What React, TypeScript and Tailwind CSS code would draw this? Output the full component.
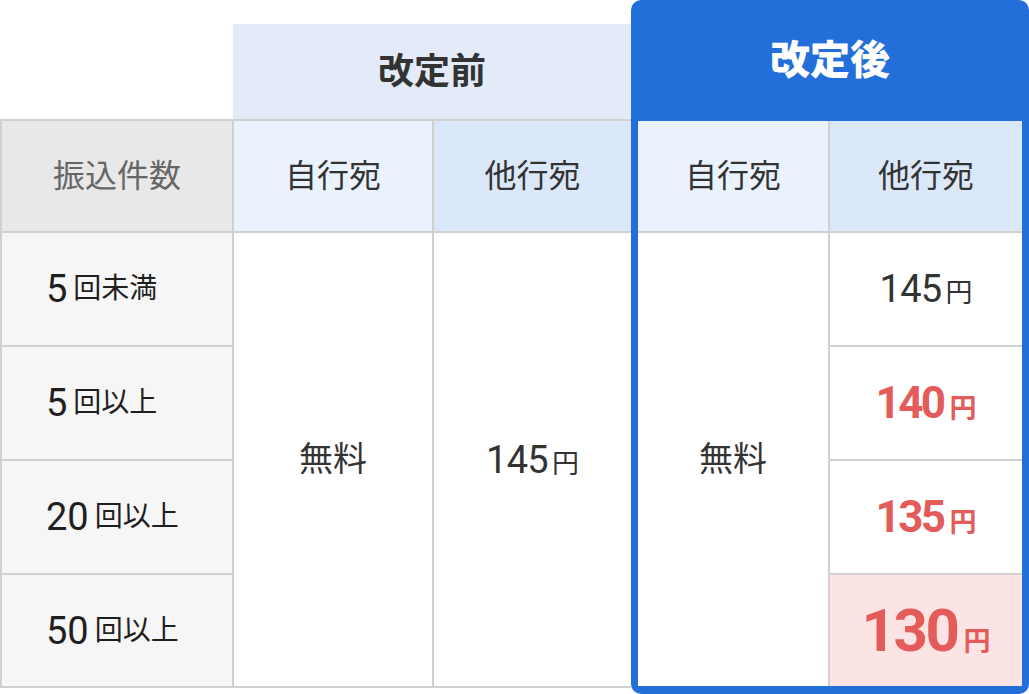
import React from 'react';

const border = 'bg-[#d0d0d0]';

const Count: React.FC<{ n: string; label: string }> = ({ n, label }) => (
  <div className="flex items-center bg-[#f6f6f6] pl-[44px] text-[#1f1f1f]">
    <span className="text-[38px] leading-none">{n}</span>
    <span className="ml-[6px] text-[28px] leading-none">{label}</span>
  </div>
);

const Price: React.FC<{ value: string; hot?: boolean; big?: boolean; bg?: string }> = ({ value, hot, big, bg = 'bg-white' }) => (
  <div className={`flex items-center justify-center ${bg}`}>
    <div className={`flex items-baseline ${hot ? 'font-bold text-[#e35c5a]' : 'text-[#333]'}`}>
      <span className={`leading-none ${big ? 'text-[60px] tracking-[-0.04em]' : hot ? 'text-[44px] tracking-[-0.06em]' : 'text-[38px] tracking-[-0.02em]'}`}>
        {value}
      </span>
      <span className={`text-[27px] leading-none ${hot ? 'ml-[6px]' : 'ml-[4px]'}`}>円</span>
    </div>
  </div>
);

export default function App() {
  return (
    <div className="flex h-[694px] w-[1029px] bg-white font-[Roboto,'Noto_Sans_CJK_JP',sans-serif]">
      {/* before revision */}
      <div className="flex w-[631px] flex-col">
        <div className="h-[24px]" />
        <div className="flex h-[95px]">
          <div className="w-[233px]" />
          <div className="flex flex-1 items-center justify-center bg-[#e2ebf7] text-[36px] font-bold text-[#333]">
            改定前
          </div>
        </div>
        <div className={`grid grid-cols-[230px_198px_197px] grid-rows-[110px_112px_112px_112px_111px] gap-[2px] p-[2px] pr-0 ${border}`}>
          <div className="flex items-center justify-center bg-[#e8e8e8] text-[32px] text-[#666]">振込件数</div>
          <div className="flex items-center justify-center bg-[#eaf2fd] text-[32px] text-[#333]">自行宛</div>
          <div className="flex items-center justify-center bg-[#dbe8f9] text-[32px] text-[#333]">他行宛</div>

          <Count n="5" label="回未満" />
          <div className="row-span-4 flex items-center justify-center bg-white text-[34px] text-[#333]">無料</div>
          <div className="row-span-4 flex">
            <Price value="145" bg="bg-white flex-1" />
          </div>
          <Count n="5" label="回以上" />
          <Count n="20" label="回以上" />
          <Count n="50" label="回以上" />
        </div>
      </div>

      {/* after revision */}
      <div className="flex w-[398px] flex-col rounded-[10px] bg-[#236fd9] px-[7px] pb-[8px]">
        <div className="flex h-[121px] items-center justify-center text-[40px] font-black text-white">改定後</div>
        <div className={`grid grid-cols-[190px_192px] grid-rows-[110px_112px_112px_112px_111px] gap-[2px] ${border}`}>
          <div className="flex items-center justify-center bg-[#eaf2fd] text-[32px] text-[#333]">自行宛</div>
          <div className="flex items-center justify-center bg-[#dbe8f9] text-[32px] text-[#333]">他行宛</div>

          <div className="row-span-4 flex items-center justify-center bg-white text-[34px] text-[#333]">無料</div>
          <Price value="145" />
          <Price value="140" hot />
          <Price value="135" hot />
          <Price value="130" hot big bg="bg-[#fde4e4]" />
        </div>
      </div>
    </div>
  );
}
